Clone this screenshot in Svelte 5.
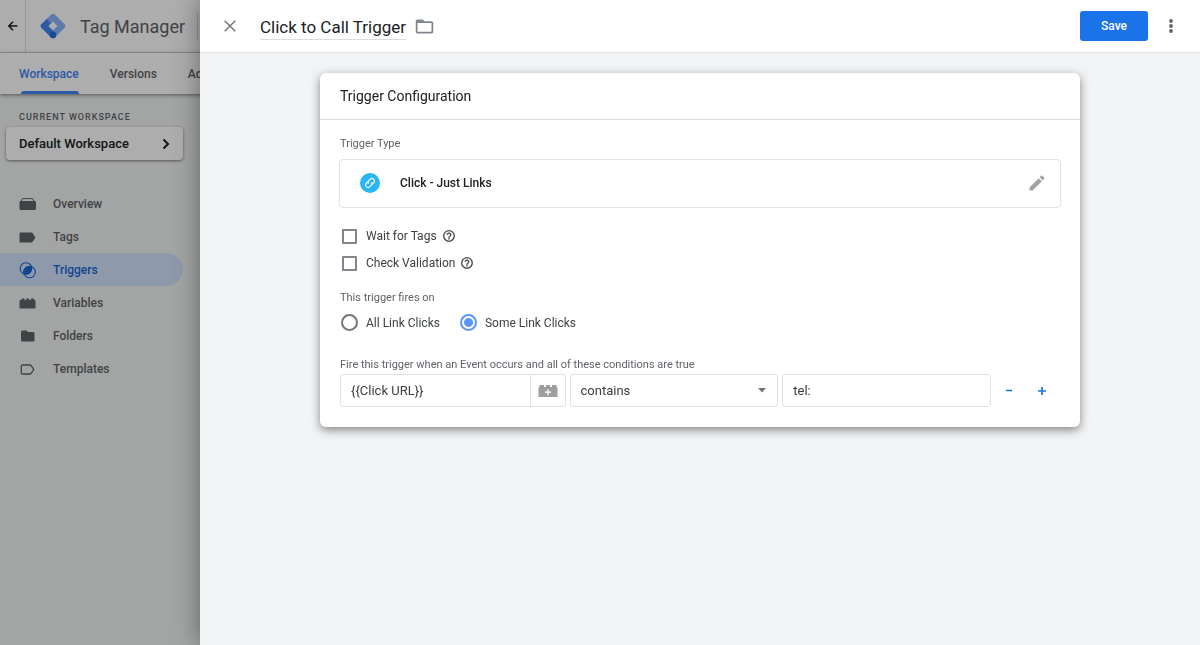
<script>
  const nav = ['Overview', 'Tags', 'Triggers', 'Variables', 'Folders', 'Templates'];
  const tabs = ['Workspace', 'Versions', 'Admin'];
  let wait = $state(false);
  let validate = $state(false);
  let fires = $state('some');
  let name = $state('Click to Call Trigger');
  let variable = $state('{{Click URL}}');
  let value = $state('tel:');
</script>

{#snippet help()}
  <svg class="help" viewBox="0 0 24 24" width="14" height="14" aria-hidden="true">
    <path fill="currentColor" stroke="currentColor" stroke-width=".3" d="M11 18h2v-2h-2v2zm1-16C6.480 2 2 6.480 2 12s4.480 10 10 10 10-4.480 10-10S17.520 2 12 2zm0 18c-4.410 0-8-3.590-8-8s3.590-8 8-8 8 3.590 8 8-3.590 8-8 8zm0-14c-2.210 0-4 1.790-4 4h2c0-1.100.9-2 2-2s2 .9 2 2c0 2-3 1.750-3 5h2c0-2.250 3-2.500 3-5 0-2.210-1.790-4-4-4z" />
  </svg>
{/snippet}

<div class="page">
  <header class="brandbar">
    <button class="back" aria-label="Back">
      <svg viewBox="0 0 12 12" width="12" height="12"><path d="M10.500 6H2M6 1.800 1.800 6 6 10.200" fill="none" stroke="#202124" stroke-width="1.500" /></svg>
    </button>
    <svg class="logo" viewBox="0 0 26 26" width="26" height="26" aria-hidden="true">
      <path d="M11.300 1.400q1.700-1.500 3.400 0l9.900 9.900q1.500 1.700 0 3.400l-9.900 9.900q-1.700 1.500-3.400 0l-9.900-9.900q-1.500-1.700 0-3.400Z" fill="#8ab4f8" />
      <path d="M6.800 5.900 11 10.500 8.500 13l7.500 7.500-1.300 4.100q-1.700 1.500-3.400 0l-9.900-9.900q-1.500-1.700 0-3.400Z" fill="#4285f4" />
      <circle cx="13" cy="22" r="3.300" fill="#246fdb" />
      <path d="m13 8.500 4.500 4.500-4.500 4.500L8.500 13Z" fill="#fff" />
    </svg>
    <span class="brand">Tag Manager</span>
    <span class="rule"></span>
  </header>
  <nav class="tabs" aria-label="Sections">
    {#each tabs as tab, i}
      <a href="#{tab}" class:on={i === 0}>{tab}</a>
    {/each}
  </nav>
  <aside>
    <div class="caption">CURRENT WORKSPACE</div>
    <button class="workspace">
      <span>Default Workspace</span>
      <svg viewBox="0 0 10 12" width="10" height="12"><path d="m2.500 1.500 4.500 4.500-4.500 4.500" fill="none" stroke="#202124" stroke-width="2" /></svg>
    </button>
    <ul>
      {#each nav as item}
        <li>
          <a href="#{item}" class:on={item === 'Triggers'}>
            <svg viewBox="0 0 18 18" width="18" height="18" fill="currentColor" aria-hidden="true">
              {#if item === 'Overview'}
                <path d="M2 6.500 3.500 3.600h10L15 6.500" fill="none" stroke="currentColor" stroke-width="1" />
                <rect x=".5" y="6" width="16.500" height="9" rx="1.200" />
              {:else if item === 'Tags'}
                <path d="M2 4.500h10.300q.8 0 1.300.6L16.500 9.500l-2.900 4.300q-.5.700-1.300.7H1.500q-1 0-1-1v-8q0-1 1-1Z" />
              {:else if item === 'Triggers'}
                <circle cx="7" cy="7.500" r="5.800" fill="none" stroke="currentColor" stroke-width="1.100" />
                <circle cx="10.500" cy="11" r="5.800" fill="none" stroke="currentColor" stroke-width="1.100" />
                <path d="M12.220 5.780A5.500 5.500 0 0 1 5.280 12.720 5.500 5.500 0 0 1 12.220 5.780Z" stroke="currentColor" />
              {:else if item === 'Variables'}
                <path d="M.5 7q0-1 1-1h1V4.500h3V6h1.700V4.500h3V6h1.700V4.500h3V6h.6q1 0 1 1v7.500H.5Z" />
              {:else if item === 'Folders'}
                <path d="M3.500 3.500h4L9 5h5q1.500 0 1.500 1.500V13q0 1.500-1.500 1.500H3.500Q2 14.500 2 13V5q0-1.500 1.500-1.500Z" />
              {:else}
                <path d="M3.500 5H11q.7 0 1.100.6l2.700 3.900-2.700 3.900q-.4.600-1.100.6H3.500q-1.200 0-1.200-1.200V6.200Q2.300 5 3.500 5Z" fill="none" stroke="currentColor" stroke-width="1.300" />
              {/if}
            </svg>
            {item}
          </a>
        </li>
      {/each}
    </ul>
  </aside>
</div>

<div class="scrim"></div>

<section class="drawer" aria-label="Trigger">
  <header class="bar">
    <button class="close" aria-label="Close">
      <svg viewBox="0 0 12 12" width="12" height="12"><path d="m.7.7 10.600 10.600M11.300.7.7 11.300" stroke="#757575" stroke-width="1.500" /></svg>
    </button>
    <input class="title" aria-label="Trigger name" bind:value={name} />
    <button class="folder" aria-label="Move to folder">
      <svg viewBox="0 0 24 24" width="21" height="21"><path fill="#80868b" d="M20 6h-8l-2-2H4c-1.100 0-1.990.9-1.990 2L2 18c0 1.100.9 2 2 2h16c1.100 0 2-.9 2-2V8c0-1.100-.9-2-2-2zm0 12H4V8h16v10z" /></svg>
    </button>
    <button class="save">Save</button>
    <button class="more" aria-label="More actions">
      <svg viewBox="0 0 4 16" width="4" height="16" fill="#5f6368"><circle cx="2" cy="3" r="1.900" /><circle cx="2" cy="8" r="1.900" /><circle cx="2" cy="13" r="1.900" /></svg>
    </button>
  </header>

  <main>
    <div class="card">
      <h2>Trigger Configuration</h2>
      <div class="body">
        <div class="label">Trigger Type</div>
        <button class="type">
          <svg viewBox="0 0 20 20" width="20" height="20" aria-hidden="true">
            <circle cx="10" cy="10" r="10" fill="#29b6f6" />
            <g transform="rotate(-45 10 10)" fill="none" stroke="#fff" stroke-width="1.100" stroke-linecap="round">
              <path d="M9.200 7.500H7.300a2.500 2.500 0 0 0 0 5h1.900a2.500 2.500 0 0 0 2.300-1.600" />
              <path d="M10.800 12.500h1.900a2.500 2.500 0 0 0 0-5h-1.900a2.500 2.500 0 0 0-2.300 1.600" />
            </g>
          </svg>
          <span>Click - Just Links</span>
          <svg viewBox="0 0 24 24" width="20" height="20" aria-hidden="true"><path fill="#a3a3a3" d="M3 17.250V21h3.750L17.810 9.940l-3.750-3.750L3 17.250zM20.710 7.040c.39-.39.39-1.020 0-1.410l-2.340-2.340c-.39-.39-1.020-.39-1.410 0l-1.830 1.830 3.750 3.750 1.830-1.830z" /></svg>
        </button>

        <div class="checks">
          <div><label><input type="checkbox" bind:checked={wait} />Wait for Tags</label>{@render help()}</div>
          <div><label><input type="checkbox" bind:checked={validate} />Check Validation</label>{@render help()}</div>
        </div>

        <fieldset>
          <legend class="label">This trigger fires on</legend>
          <div class="radios">
            <label><input type="radio" name="fires" value="all" bind:group={fires} />All Link Clicks</label>
            <label><input type="radio" name="fires" value="some" bind:group={fires} />Some Link Clicks</label>
          </div>
        </fieldset>

        <div class="label">Fire this trigger when an Event occurs and all of these conditions are true</div>
        <div class="condition">
          <div class="field variable">
            <input aria-label="Variable" bind:value={variable} />
            <button aria-label="Choose variable">
              <svg viewBox="0 0 20 14" width="20" height="14"><path fill="#9e9e9e" d="M.5 4q0-1 1-1V1H6v2h2V1h4v2h2V1h4.500v2q1 0 1 1v9H.5Z" /><path d="M10 5.200v6M7 8.200h6" stroke="#fff" stroke-width="1.300" /></svg>
            </button>
          </div>
          <div class="field operator">
            <select aria-label="Operator">
              <option>contains</option>
              <option>equals</option>
              <option>starts with</option>
            </select>
            <svg viewBox="0 0 10 5" width="10" height="5" aria-hidden="true"><path d="M1 0h8L5 4.500Z" fill="#757575" /></svg>
          </div>
          <div class="field value"><input aria-label="Value" bind:value={value} /></div>
          <div class="ops">
            <button aria-label="Remove condition"><svg viewBox="0 0 8 8" width="8" height="8"><path d="M1 3.500h6" stroke="#1a73e8" stroke-width="1.500" /></svg></button>
            <button aria-label="Add condition"><svg viewBox="0 0 8 8" width="8" height="8"><path d="M0 4h8M4 0v8" stroke="#1a73e8" stroke-width="1.700" /></svg></button>
          </div>
        </div>
      </div>
    </div>
  </main>
</section>

<style>
  :global(body) { background: #f1f3f4; font-family: Roboto, "Liberation Sans", sans-serif; }
  :global(*) { box-sizing: border-box; }
  button, input, select { font: inherit; color: inherit; }
  button { border: 0; padding: 0; background: none; cursor: pointer; display: flex; align-items: center; justify-content: center; }
  a { text-decoration: none; color: inherit; }
  svg { flex: none; display: block; }

  .page { min-height: 100vh; color: #5f6368; overflow: hidden; font-weight: 500; font-size: 12px; }
  .brandbar { display: flex; align-items: center; height: 53px; background: #fff; border-bottom: 1px solid #dadce0; }
  .back { width: 26px; height: 100%; border-right: 1px solid #dadce0; }
  .logo { margin: 0 14px; }
  .brand { font-size: 18px; font-weight: 400; white-space: nowrap; }
  .rule { width: 1px; height: 28px; margin-left: 12px; background: #dadce0; }
  .tabs { display: flex; gap: 31px; height: 41px; padding-left: 19px; background: #fff; box-shadow: 0 1px 4px rgba(0, 0, 0, 0.5); position: relative; }
  .tabs a { display: flex; align-items: center; position: relative; }
  .tabs .on { color: #4285f4; }
  .tabs .on::after { content: ''; position: absolute; inset: auto 0 0 2px; height: 3px; border-radius: 3px 3px 0 0; background: #4285f4; }

  aside { width: 183px; padding-top: 16px; }
  .caption { padding-left: 19px; font-size: 9px; line-height: 14px; letter-spacing: 1px; }
  .workspace { justify-content: space-between; width: 177px; height: 33px; margin: 3px 0 0 6px; padding: 0 12px 0 13px; border-radius: 4px; background: #fff; color: #202124; font-size: 13px; box-shadow: 0 1px 3px rgba(0, 0, 0, 0.5); }
  ul { list-style: none; margin: 27px 0 0; padding: 0; }
  li a { display: flex; align-items: center; gap: 16px; height: 33px; padding-left: 19px; border-radius: 0 17px 17px 0; }
  li .on { background: #d2e3fc; color: #1967d2; }

  .scrim { position: fixed; inset: 0; background: rgba(0, 0, 0, 0.32); }
  .drawer { position: absolute; inset: 0 0 auto 200px; min-height: 100vh; background: #f1f3f4; color: #3c4043; box-shadow: 0 0 24px rgba(0, 0, 0, 0.4); }
  .bar { display: flex; align-items: center; height: 53px; padding: 0 26px 0 24px; background: #fff; border-bottom: 1px solid #e4e5e7; }
  .close { width: 12px; height: 24px; }
  .title { field-sizing: content; margin: 0 8px 0 24px; height: 28px; padding: 2px 0 0; border: 0; border-bottom: 1px solid #dadce0; background: none; font-size: 17px; color: #202124; outline: 0; }
  .save { width: 68px; height: 30px; margin: 0 20px 0 auto; border-radius: 3px; background: #1a73e8; color: #fff; font-size: 12px; font-weight: 500; }
  .more { width: 6px; height: 24px; }

  main { padding: 20px 120px; }
  .card { background: #fff; border-radius: 6px; box-shadow: 0 3px 10px rgba(0, 0, 0, 0.45); }
  h2 { margin: 0; padding: 0 20px; font-size: 14px; font-weight: 400; line-height: 46px; color: #202124; border-bottom: 1px solid #dadce0; }
  .body { padding: 17px 19px 20px; }
  .label { font-size: 11px; line-height: 14px; color: #5f6368; padding: 0 1px; }
  .type { width: 100%; height: 49px; margin-top: 8px; padding: 0 13px 1px 20px; border: 1px solid #dfe1e5; border-radius: 4px; gap: 20px; font-size: 12px; font-weight: 500; color: #202124; text-align: left; }
  .type span { flex: 1; }
  .checks { display: grid; gap: 3px; margin: 16px 0; }
  .checks div { display: flex; align-items: center; gap: 5px; height: 24px; }
  .checks label { gap: 9px; }
  label { display: flex; align-items: center; gap: 8px; font-size: 12px; color: #3c4043; }
  .help { color: #3c4043; }
  input[type='checkbox'], input[type='radio'] { appearance: none; margin: 0; background: #fff; }
  input[type='checkbox'] { width: 15px; height: 15px; margin-left: 3px; border: 2px solid #80868b; border-radius: 1px; }
  input[type='checkbox']:checked { background: #1a73e8; }
  input[type='radio'] { width: 17px; height: 17px; border: 2px solid #757575; border-radius: 50%; }
  input[type='radio']:checked { border-color: #5b95f9; background: radial-gradient(circle, #5b95f9 4px, #fff 5px); }
  fieldset { border: 0; margin: 0 0 27px; padding: 0; min-width: 0; }
  .radios { display: flex; gap: 20px; padding: 9px 0 0 2px; }
  .condition { display: flex; gap: 4px; margin: 2px 1px 0; font-size: 13px; }
  .field { display: flex; align-items: center; position: relative; height: 33px; border: 1px solid #dfe1e5; border-radius: 3px; }
  .variable { flex: 226 1 0; min-width: 0; }
  .operator, .value { flex: 209 1 0; min-width: 0; }
  .field input, .field select { flex: 1; width: 100%; min-width: 0; height: 100%; padding: 0 10px; border: 0; background: none; outline: 0; appearance: none; }
  .variable button { width: 35px; height: 100%; border-left: 1px solid #dfe1e5; }
  .operator svg { position: absolute; right: 10px; pointer-events: none; }
  .ops { display: flex; align-items: center; gap: 25px; padding: 0 14px 0 10px; }
</style>
